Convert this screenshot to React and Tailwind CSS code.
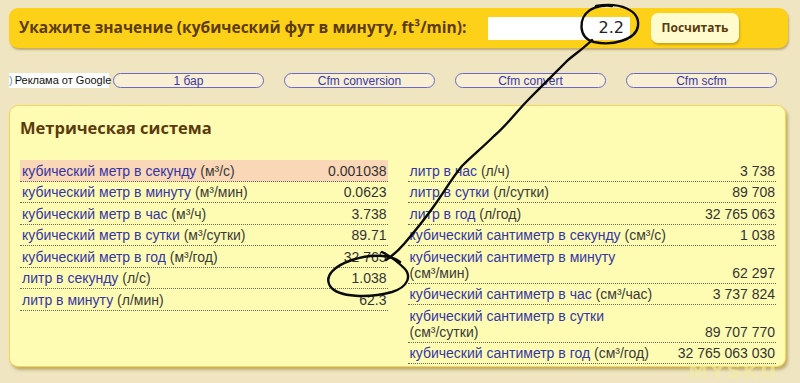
const leftRows = [
  { name: 'кубический метр в секунду', unit: '(м³/с)', value: '0.001038', hl: true },
  { name: 'кубический метр в минуту', unit: '(м³/мин)', value: '0.0623' },
  { name: 'кубический метр в час', unit: '(м³/ч)', value: '3.738' },
  { name: 'кубический метр в сутки', unit: '(м³/сутки)', value: '89.71' },
  { name: 'кубический метр в год', unit: '(м³/год)', value: '32 765' },
  { name: 'литр в секунду', unit: '(л/с)', value: '1.038' },
  { name: 'литр в минуту', unit: '(л/мин)', value: '62.3' },
];

const rightRows = [
  { name: 'литр в час', unit: '(л/ч)', value: '3 738' },
  { name: 'литр в сутки', unit: '(л/сутки)', value: '89 708' },
  { name: 'литр в год', unit: '(л/год)', value: '32 765 063' },
  { name: 'кубический сантиметр в секунду', unit: '(см³/с)', value: '1 038' },
  { name: 'кубический сантиметр в минуту', unit: '(см³/мин)', value: '62 297', wrap: true },
  { name: 'кубический сантиметр в час', unit: '(см³/час)', value: '3 737 824' },
  { name: 'кубический сантиметр в сутки', unit: '(см³/сутки)', value: '89 707 770', wrap: true },
  { name: 'кубический сантиметр в год', unit: '(см³/год)', value: '32 765 063 030' },
];

const ads = ['1 бар', 'Cfm conversion', 'Cfm convert', 'Cfm scfm'];

function Row({ row }) {
  return (
    <div
      className={
        'flex items-end justify-between border-b border-dotted border-[#6b6b55] pl-[2px] pr-[1px] pt-[2.5px] pb-[2px] leading-[16px] ' +
        (row.hl ? 'bg-[#fad7b6]' : '')
      }
    >
      <span className="pr-2">
        <span className="text-[#3535a6]">{row.name}</span>
        {row.wrap ? <br /> : ' '}
        <span className="text-[#3a3a3a]">{row.unit}</span>
      </span>
      <span className="shrink-0 text-[#333]">{row.value}</span>
    </div>
  );
}

export default function App() {
  return (
    <div className="relative h-[383px] w-[800px] overflow-hidden bg-[#efe5c1] px-[9px] pt-[8px] font-['Liberation_Sans',Arial,sans-serif]">
      {/* input bar */}
      <div className="flex h-[40px] w-[779px] items-center rounded-[9px] bg-[#fdd118] pl-[10px] shadow-[1px_2px_2px_rgba(140,105,10,0.45)]">
        <div className="w-[469px] font-['Open_Sans',sans-serif] text-[15.5px] font-bold text-[#5b3a0c]">
          Укажите значение (кубический фут в минуту, ft³/min):
        </div>
        <div className="flex h-[23px] w-[142px] items-center justify-end bg-white pr-[6px] font-['DejaVu_Sans',sans-serif] text-[16px] text-[#222]">
          2.2
        </div>
        <button className="ml-[21px] h-[30px] w-[88px] rounded-[7px] bg-[#fffbcc] font-['Open_Sans',sans-serif] text-[12px] font-bold text-[#5b3a0c] shadow-[1px_2px_2px_rgba(150,110,0,0.45)]">
          Посчитать
        </button>
      </div>

      {/* ads */}
      <div className="mt-[25px] flex h-[15px] items-center">
        <div className="flex h-[15px] w-[100px] items-center whitespace-nowrap bg-white text-[11px] leading-none text-[#111]">
          <span className="mr-[2px] text-[#5b8fd0]">)</span>Реклама от Google
        </div>
        <div className="ml-[4px] flex gap-[20px]">
          {ads.map((a) => (
            <div
              key={a}
              className="flex h-[15px] w-[151px] items-center justify-center rounded-full border-[1.5px] border-[#6a6ac6] bg-[#f8efd4] text-[12px] leading-none text-[#3939a8]"
            >
              {a}
            </div>
          ))}
        </div>
      </div>

      {/* metric panel */}
      <div className="mt-[17px] h-[262px] w-[777px] rounded-[9px] border border-[#f2d65a] bg-[#fefcb3] pl-[10px] pr-[9px] pt-[9px] shadow-[2px_3px_3px_rgba(150,120,30,0.5)]">
        <h2 className="font-['Open_Sans',sans-serif] text-[16.5px] font-bold leading-[26px] text-[#5b3a0c]">
          Метрическая система
        </h2>
        <div className="mt-[19px] flex gap-[20px] text-[14px]">
          <div className="w-[368px]">
            {leftRows.map((r) => (
              <Row key={r.name} row={r} />
            ))}
          </div>
          <div className="w-[369px]">
            {rightRows.map((r) => (
              <Row key={r.name} row={r} />
            ))}
          </div>
        </div>
      </div>

      <div className="pointer-events-none absolute left-[688px] top-[356px] font-['DejaVu_Sans',sans-serif] text-[20px] font-bold tracking-[2px] text-[#f5ee9e] opacity-60">
        MYSKU
      </div>

      {/* hand-drawn annotation */}
      <svg className="pointer-events-none absolute left-0 top-0" width="800" height="383" viewBox="0 0 800 383">
        <g fill="none" stroke="#0a0a0a" strokeWidth="2.4" strokeLinecap="round" strokeLinejoin="round">
          <path d="M596 6 C620 2 640 10 638 26 C636 40 612 46 594 42 C578 38 578 18 590 10 C596 6 606 5 612 6" />
          <path d="M592 40 C582 50 572 56 566 62 C552 76 542 86 530 98 C516 112 508 124 494 136 C482 148 472 156 462 166 C452 178 444 192 434 206 C424 220 416 230 404 244 C398 251 392 256 386 260" />
          <path d="M400 262 C390 254 370 254 352 260 C334 266 324 276 330 286 C338 298 370 298 392 292 C408 287 412 276 404 268 C398 262 390 256 382 252" />
        </g>
      </svg>
    </div>
  );
}
